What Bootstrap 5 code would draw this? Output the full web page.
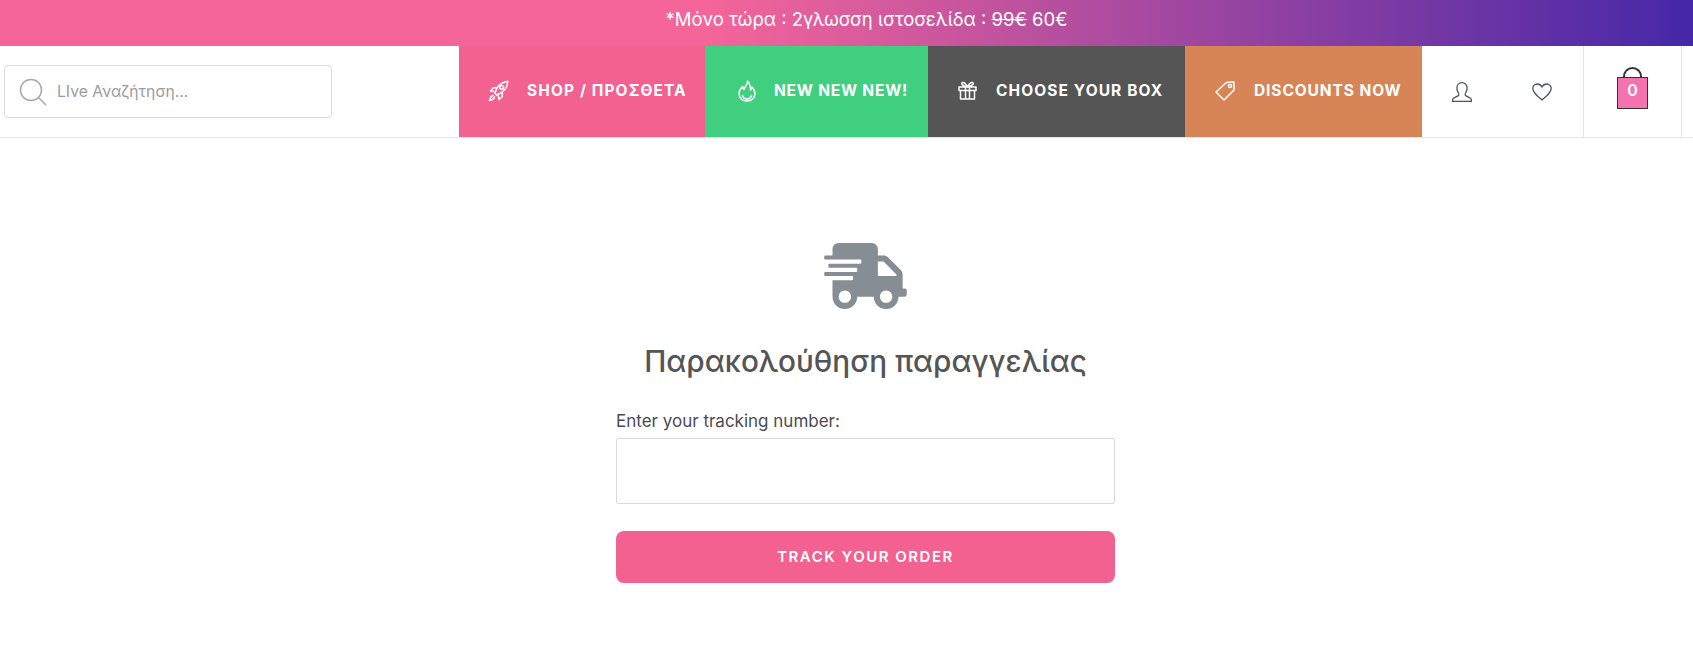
<!DOCTYPE html>
<html lang="el">
<head>
  <meta charset="UTF-8" />
  <title>Παρακολούθηση παραγγελίας</title>
  <meta name="viewport" content="width=device-width, initial-scale=1.0"/>
  <link href="https://cdn.jsdelivr.net/npm/bootstrap@5.3.3/dist/css/bootstrap.min.css" rel="stylesheet">
  <style>
    body {
      font-family: "Inter", "Noto Sans", sans-serif;
      color: #4b4b55;
      background: #fff;
    }
    .promo-bar {
      height: 46px;
      padding-left: 40px;
      padding-bottom: 6px;
      background: linear-gradient(90deg, #f4659a 0%, #f4659a 42%, #4527a8 100%);
      font-size: 18.5px;
      color: #fff;
    }
    .site-header {
      height: 92px;
      border-bottom: 1px solid #e8e8e8;
    }
    .search-box {
      width: 328px;
      height: 53px;
      margin-left: 4px;
      margin-top: 19px;
      padding-left: 14px;
      border: 1px solid #dcdcdc;
      border-radius: 4px;
      gap: 10px;
    }
    .search-box input {
      border: 0;
      outline: 0;
      flex: 1;
      min-width: 0;
      font-size: 15.7px;
      padding: 0;
    }
    .search-box input::placeholder { color: #9c9c9c; }
    .main-menu { margin-left: 127px; }
    .menu-tab {
      height: 91px;
      padding-bottom: 2px;
      color: #fff;
      font-size: 15.500px;
      font-weight: 700;
      letter-spacing: 1.100px;
      text-decoration: none;
      white-space: nowrap;
    }
    .menu-tab svg { fill: none; stroke: #fff; stroke-width: 1.5; stroke-linejoin: round; stroke-linecap: round; flex: none; }
    .tab-shop { width: 246px; background: #f36191; padding-left: 29px; gap: 18px; }
    .tab-new { width: 223px; background: #3fcf7f; padding-left: 33px; gap: 18px; }
    .tab-box { width: 257px; background: #555; padding-left: 30px; gap: 19px; }
    .tab-disc { width: 237px; background: #d78556; padding-left: 30px; gap: 19px; }
    .tab-new span { letter-spacing: .8px; }
    .tab-disc span { letter-spacing: .9px; }
    .icon-cells { width: 161px; padding: 0 31px 0 30px; }
    .icon-cells svg { fill: none; stroke: #4a5560; stroke-width: 1.3; }
    .bag-cell {
      width: 99px;
      border-left: 1px solid #e4e4e4;
      border-right: 1px solid #e4e4e4;
    }
    .bag-wrap { width: 31px; height: 41px; margin-top: 21px; }
    .bag-handle {
      width: 19px;
      height: 10px;
      margin: 0 auto;
      border: 2px solid #333;
      border-bottom: 0;
      border-radius: 10px 10px 0 0;
    }
    .bag-body {
      height: 32px;
      padding-top: 1px;
      background: #f472ad;
      border: 1px solid #333;
      color: #fff;
      font-size: 16px;
      font-weight: 600;
      line-height: 22px;
      text-align: center;
    }
    .tracking-page { padding-left: 38px; }
    .tracking-form { width: 499px; padding-top: 105px; }
    .truck-icon { display: block; margin: 0 auto; fill: #868d94; }
    .tracking-title {
      margin: 34px 0 30px;
      font-size: 29.700px;
      font-weight: 500;
      line-height: 36px;
      color: #555;
      text-align: center;
      white-space: nowrap;
    }
    .tracking-label { margin-bottom: 5px; font-size: 17px; line-height: 24px; display: block; }
    .tracking-input.form-control {
      height: 66px;
      border: 1px solid #d9d9d9;
      border-radius: 2px;
    }
    .tracking-btn.btn {
      height: 52px;
      margin-top: 27px;
      background: #f36191;
      border: 0;
      border-radius: 8px;
      color: #fff;
      font-size: 15px;
      font-weight: 600;
      letter-spacing: 1.500px;
    }
  </style>
</head>
<body>

<div class="promo-bar d-flex align-items-center justify-content-center">
  <span>*Μόνο τώρα : 2γλωσση ιστοσελίδα : <s>99€</s> 60€</span>
</div>

<header class="site-header d-flex align-items-start">
  <div class="search-box d-flex align-items-center">
    <svg width="28" height="28" viewBox="0 0 28 28" fill="none" stroke="#a8a8a8" stroke-width="1.5"><circle cx="12" cy="12" r="10.5"/><path d="M19.5 19.5l7.5 7.5"/></svg>
    <input type="text" placeholder="LIve Αναζήτηση...">
  </div>

  <nav class="main-menu d-flex">
    <a href="#" class="menu-tab tab-shop d-flex align-items-center">
      <svg width="21" height="22" viewBox="0 0 21 22"><path d="M7 13.500C8 7.500 12 2.500 19.800 1.200 19.500 9 14.500 13 8.500 15z"/><circle cx="13.700" cy="7.300" r="1.900"/><path d="M9 7.800H5.500L2.500 11l4.200.8M14.300 13v3.500L11 19.500l-.8-4.200M5 15.500c-1.500.5-3 2-3.500 5 3-.5 4.500-2 5-3.500"/></svg>
      <span>SHOP / ΠΡΟΣΘΕΤΑ</span>
    </a>
    <a href="#" class="menu-tab tab-new d-flex align-items-center">
      <svg width="18" height="22" viewBox="0 0 18 22"><path d="M9.500 1C10 5 6.500 6.500 6 9.500 5 8.500 4.700 7.500 4.700 6.500 2.500 8.500 1 11 1 13.500 1 18 4.500 21 9 21s8-3 8-7.500c0-3-1.500-5-3-6.500 0 1.500-.5 2.500-1.500 3C12.500 6.500 11.500 3 9.500 1z"/><path d="M4.500 15.500c.5 2.300 2.300 3.500 4.500 3.500s4-1.200 4.500-3.500"/></svg>
      <span>NEW NEW NEW!</span>
    </a>
    <a href="#" class="menu-tab tab-box d-flex align-items-center">
      <svg width="19" height="19" viewBox="0 0 19 19"><path d="M1 6h17v3.500H1zM2.500 9.500V18h14V9.500M7.500 6v12M11.500 6v12M9.500 6C8 3 6 1 4.500 1.500S3.500 5 9.500 6zM9.500 6c1.500-3 3.500-5 5-4.500S15.500 5 9.500 6z"/></svg>
      <span>CHOOSE YOUR BOX</span>
    </a>
    <a href="#" class="menu-tab tab-disc d-flex align-items-center">
      <svg width="20" height="20" viewBox="0 0 20 20"><path d="M11.500 1.500L19 1v8L9 19 1 11z"/><circle cx="15" cy="5" r="1.600"/></svg>
      <span>DISCOUNTS NOW</span>
    </a>
  </nav>

  <div class="icon-cells d-flex align-items-center justify-content-between align-self-stretch">
    <svg width="20" height="20" viewBox="0 0 20 20"><path d="M.7 19.300h18.600v-2c0-1.500-4.500-2.300-6-4-.5-.7-.3-1.500.5-2.800 1-1.500 1.300-3 1.300-4.500 0-3-2-5.300-5.100-5.300S4.900 3 4.900 6c0 1.500.3 3 1.300 4.500.8 1.300 1 2.100.5 2.800-1.500 1.700-6 2.500-6 4z"/></svg>
    <svg width="20" height="18" viewBox="0 0 20 18"><path d="M10 17C5 12.800.8 9.500.8 5.500.8 3 2.800 1 5.300 1 7.300 1 9 2 10 4c1-2 2.700-3 4.700-3 2.500 0 4.500 2 4.500 4.500C19.200 9.500 15 12.800 10 17z"/></svg>
  </div>

  <div class="bag-cell d-flex justify-content-center align-self-stretch">
    <div class="bag-wrap">
      <div class="bag-handle"></div>
      <div class="bag-body">0</div>
    </div>
  </div>
</header>

<main class="tracking-page d-flex justify-content-center">
  <form class="tracking-form">
    <svg class="truck-icon" width="83" height="66" viewBox="0 0 640 512"><path d="M624 352h-16V243.900c0-12.700-5.100-24.900-14.100-33.900L494 110.100c-9-9-21.200-14.100-33.900-14.100H416V48c0-26.500-21.500-48-48-48H112C85.500 0 64 21.500 64 48v48H8c-4.400 0-8 3.600-8 8v16c0 4.400 3.600 8 8 8h272c4.400 0 8 3.600 8 8v16c0 4.400-3.600 8-8 8H40c-4.400 0-8 3.600-8 8v16c0 4.400 3.600 8 8 8h208c4.400 0 8 3.600 8 8v16c0 4.400-3.600 8-8 8H8c-4.400 0-8 3.600-8 8v16c0 4.400 3.600 8 8 8h208c4.400 0 8 3.600 8 8v16c0 4.400-3.600 8-8 8H64v128c0 53 43 96 96 96s96-43 96-96h128c0 53 43 96 96 96s96-43 96-96h48c8.800 0 16-7.200 16-16v-32c0-8.800-7.200-16-16-16zM160 464c-26.500 0-48-21.500-48-48s21.500-48 48-48 48 21.500 48 48-21.500 48-48 48zm320 0c-26.500 0-48-21.500-48-48s21.500-48 48-48 48 21.500 48 48-21.500 48-48 48zm80-208H416V144h44.100l99.900 99.900V256z"/></svg>
    <h1 class="tracking-title">Παρακολούθηση παραγγελίας</h1>
    <label class="tracking-label" for="trackingNumber">Enter your tracking number:</label>
    <input type="text" id="trackingNumber" class="form-control tracking-input">
    <button type="button" class="btn tracking-btn w-100">TRACK YOUR ORDER</button>
  </form>
</main>

<script src="https://cdn.jsdelivr.net/npm/bootstrap@5.3.3/dist/js/bootstrap.bundle.min.js"></script>
</body>
</html>
